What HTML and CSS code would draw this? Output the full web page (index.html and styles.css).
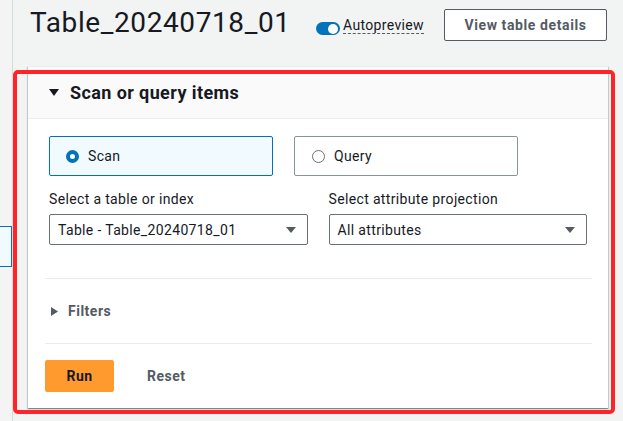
FILE: index.html
```html
<!DOCTYPE html>
<html lang="en">
<head>
<meta charset="utf-8">
<title>Table_20240718_01</title>
<link rel="stylesheet" href="styles.css">
</head>
<body>
<div class="page">
  <aside class="side"><div class="side-tile"></div></aside>
  <main class="main">
    <header class="top">
      <h1 class="title">Table_20240718_01</h1>
      <div class="top-actions">
        <div class="autoprev">
          <span class="toggle"><span class="knob"></span></span>
          <span class="autoprev-label">Autopreview</span>
        </div>
        <button class="btn-normal" type="button">View table details</button>
      </div>
    </header>
    <section class="card">
      <div class="card-head">
        <svg class="caret-down" width="10" height="7" viewBox="0 0 10 7"><path d="M0 0H10L5 7Z" fill="#16191f"/></svg>
        <h2 class="card-title">Scan or query items</h2>
      </div>
      <div class="card-body">
        <div class="fields">
          <div class="tiles">
            <label class="tile selected"><span class="radio on"></span>Scan</label>
            <label class="tile"><span class="radio"></span>Query</label>
          </div>
          <div class="selects">
            <div class="field">
              <div class="label">Select a table or index</div>
              <div class="select"><span>Table - Table_20240718_01</span><svg class="sel-caret" width="10" height="6" viewBox="0 0 10 6"><path d="M0 0H10L5 6Z" fill="#545b64"/></svg></div>
            </div>
            <div class="field">
              <div class="label">Select attribute projection</div>
              <div class="select"><span>All attributes</span><svg class="sel-caret" width="10" height="6" viewBox="0 0 10 6"><path d="M0 0H10L5 6Z" fill="#545b64"/></svg></div>
            </div>
          </div>
        </div>
        <div class="filters">
          <svg class="caret-right" width="7" height="9" viewBox="0 0 7 9"><path d="M0 0L7 4.5L0 9Z" fill="#545b64"/></svg>
          <span class="filters-label">Filters</span>
        </div>
        <div class="actions">
          <button class="btn-primary" type="button">Run</button>
          <button class="btn-link" type="button">Reset</button>
        </div>
      </div>
    </section>
  </main>
  <div class="highlight"></div>
</div>
</body>
</html>
```

FILE: styles.css
```css
* { box-sizing: border-box; }
html, body { margin: 0; padding: 0; }
body {
  background: #f2f3f3;
  font-family: Roboto, "Liberation Sans", Arial, sans-serif;
  color: #16191f;
  font-size: 14px;
  letter-spacing: 0.35px;
  width: 623px;
  height: 421px;
  overflow: hidden;
}
.page {
  position: relative;
  display: flex;
  height: 421px;
}
.side {
  width: 13px;
  flex: none;
  border-right: 1px solid #d5dbdb;
  padding-top: 226px;
  background: #f4f4f4;
}
.side-tile {
  width: 12px;
  height: 41px;
  background: #f1faff;
  border: 1px solid #0073bb;
  border-left: none;
}
.main {
  flex: 1;
  min-width: 0;
}
.top {
  height: 66px;
  display: flex;
  justify-content: space-between;
  align-items: flex-start;
  padding: 0 16px 0 17px;
}
.title {
  margin: 5px 0 0;
  font-size: 28px;
  line-height: 36px;
  font-weight: 400;
  letter-spacing: 0.6px;
  color: #16191f;
}
.top-actions {
  display: flex;
  align-items: flex-start;
  gap: 20px;
}
.autoprev {
  display: flex;
  align-items: flex-start;
  gap: 3px;
  margin-top: 17px;
}
.toggle {
  width: 24px;
  height: 13px;
  margin-top: 5px;
  border-radius: 7px;
  background: #0073bb;
  display: flex;
  justify-content: flex-end;
  align-items: center;
  padding-right: 2px;
}
.knob {
  width: 10px;
  height: 10px;
  border-radius: 50%;
  background: #fff;
}
.autoprev-label {
  display: inline-block;
  line-height: 16px;
  border-bottom: 1px dashed #545b64;
  color: #16191f;
}
.btn-normal {
  margin-top: 9px;
  height: 32px;
  width: 163px;
  padding: 0;
  border: 1px solid #545b64;
  border-radius: 2px;
  background: #fff;
  color: #545b64;
  font: 700 14px Roboto, "Liberation Sans", Arial, sans-serif;
  letter-spacing: 0.6px;
}
.card {
  margin: 0 15px 0 15px;
  background: #fff;
  border-top: 1px solid #eaeded;
  box-shadow: 0 1px 1px 0 rgba(0, 28, 36, 0.3), 1px 1px 1px 0 rgba(0, 28, 36, 0.15), -1px 1px 1px 0 rgba(0, 28, 36, 0.15);
}
.card-head {
  height: 52px;
  display: flex;
  align-items: center;
  gap: 11px;
  padding: 0 20px 0 21px;
  background: #fafafa;
  border-bottom: 1px solid #eaeded;
}
.caret-down { display: block; flex: none; }
.card-title {
  margin: 0;
  font-size: 18px;
  line-height: 22px;
  font-weight: 700;
  letter-spacing: 0.4px;
  color: #16191f;
}
.card-body {
  padding: 17px 16px 16px 17px;
}
.fields {
  padding: 0 5px 0 4px;
}
.tiles {
  display: flex;
  gap: 21px;
}
.tile {
  width: 224px;
  height: 40px;
  display: flex;
  align-items: center;
  gap: 9px;
  padding-left: 17px;
  border: 1px solid #879596;
  border-radius: 2px;
  background: #fff;
  font-size: 14px;
  color: #16191f;
}
.tile.selected {
  background: #f1faff;
  border-color: #0073bb;
  padding-left: 16px;
}
.radio {
  width: 13px;
  height: 13px;
  border-radius: 50%;
  border: 1px solid #687078;
  background: #fff;
  flex: none;
}
.radio.on {
  border: 4px solid #0073bb;
}
.selects {
  display: grid;
  grid-template-columns: 1fr 1fr;
  gap: 21px;
  margin-top: 13px;
}
.label {
  line-height: 20px;
  margin-bottom: 5px;
  color: #16191f;
}
.select {
  height: 31px;
  display: flex;
  align-items: center;
  justify-content: space-between;
  padding: 0 11px 0 8px;
  border: 1px solid #687078;
  border-radius: 2px;
  background: #fff;
  color: #16191f;
}
.sel-caret { display: block; }
.filters {
  margin-top: 33px;
  height: 66px;
  border-top: 1px solid #eaeded;
  border-bottom: 1px solid #eaeded;
  display: flex;
  align-items: center;
  gap: 10px;
  padding-left: 6px;
}
.caret-right { display: block; }
.filters-label {
  font-weight: 700;
  letter-spacing: 0.5px;
  color: #545b64;
}
.actions {
  padding-top: 16px;
  display: flex;
  gap: 13px;
}
.btn-primary {
  width: 69px;
  height: 32px;
  border: none;
  border-radius: 2px;
  background: #ff9a2e;
  color: #16191f;
  font: 700 14px Roboto, "Liberation Sans", Arial, sans-serif;
  letter-spacing: 0.5px;
}
.btn-link {
  height: 32px;
  padding: 0 20px;
  border: none;
  background: transparent;
  color: #545b64;
  font: 700 14px Roboto, "Liberation Sans", Arial, sans-serif;
  letter-spacing: 0.5px;
}
.highlight {
  position: absolute;
  left: 13px;
  top: 70px;
  width: 602px;
  height: 344px;
  border: 4px solid #ff2429;
  border-radius: 5px;
  pointer-events: none;
}
```
